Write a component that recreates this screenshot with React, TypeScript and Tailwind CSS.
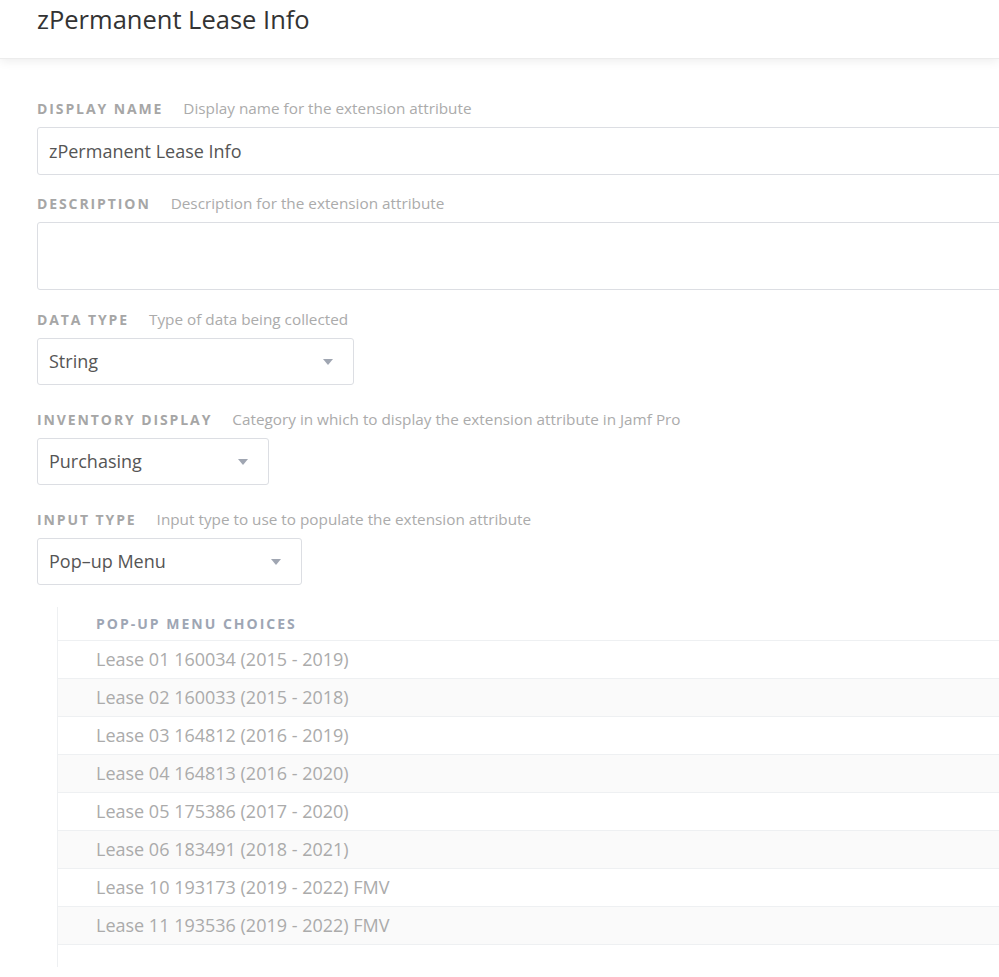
import React from 'react';

const CHOICES = [
  'Lease 01 160034 (2015 - 2019)',
  'Lease 02 160033 (2015 - 2018)',
  'Lease 03 164812 (2016 - 2019)',
  'Lease 04 164813 (2016 - 2020)',
  'Lease 05 175386 (2017 - 2020)',
  'Lease 06 183491 (2018 - 2021)',
  'Lease 10 193173 (2019 - 2022) FMV',
  'Lease 11 193536 (2019 - 2022) FMV',
];

function FieldLabel({ name, help }: { name: string; help: string }) {
  return (
    <div className="flex items-baseline gap-5 h-[18px] mb-[10px] leading-[18px]">
      <span className="text-[14px] font-bold tracking-[1.9px] text-[#a6a6a6] uppercase">{name}</span>
      <span className="text-[15.3px] text-[#ababab]">{help}</span>
    </div>
  );
}

function Caret() {
  return (
    <svg width="10" height="6" viewBox="0 0 10 6" className="shrink-0">
      <path d="M0 0h10L5 6z" fill="#a0a6b2" />
    </svg>
  );
}

function Select({ value, width }: { value: string; width: string }) {
  return (
    <div className={`${width} h-[47px] flex items-center justify-between pl-[11px] pr-[20px] border border-[#dcdee3] rounded-[3px] bg-white`}>
      <span className="text-[18px] text-[#555]">{value}</span>
      <Caret />
    </div>
  );
}

export default function App() {
  return (
    <div className="w-[999px] h-[977px] overflow-hidden bg-white font-['Open_Sans',sans-serif]">
      {/* Header */}
      <div className="h-[59px] pl-[37px] pt-[2px] bg-white shadow-[0_2px_10px_rgba(0,0,0,0.08)] border-b border-[#ececec] relative z-10">
        <h1 className="text-[25.5px] text-[#333] leading-[34px]">zPermanent Lease Info</h1>
      </div>

      <div className="pl-[37px] pt-[40px]">
        <FieldLabel name="Display Name" help="Display name for the extension attribute" />
        <div className="w-[1000px] h-[48px] flex items-center pl-[11px] border border-[#dcdee3] rounded-[3px]">
          <span className="text-[18px] text-[#555]">zPermanent Lease Info</span>
        </div>

        <div className="mt-[19px]">
          <FieldLabel name="Description" help="Description for the extension attribute" />
          <div className="w-[1000px] h-[68px] border border-[#dcdee3] rounded-[3px]" />
        </div>

        <div className="mt-[20px]">
          <FieldLabel name="Data Type" help="Type of data being collected" />
          <Select value="String" width="w-[317px]" />
        </div>

        <div className="mt-[25px]">
          <FieldLabel name="Inventory Display" help="Category in which to display the extension attribute in Jamf Pro" />
          <Select value="Purchasing" width="w-[232px]" />
        </div>

        <div className="mt-[25px]">
          <FieldLabel name="Input Type" help="Input type to use to populate the extension attribute" />
          <Select value="Pop–up Menu" width="w-[265px]" />
        </div>

        {/* Choices table */}
        <div className="mt-[22px] ml-[20px] border-l border-[#eef0f2] h-[360px]">
          <div className="h-[34px] flex items-center pl-[38px] border-b border-[#eef0f2]">
            <span className="text-[14px] font-bold tracking-[2px] text-[#9ea6b4] uppercase">Pop-up Menu Choices</span>
          </div>
          {CHOICES.map((c, i) => (
            <div
              key={c}
              className={`h-[38px] flex items-center pl-[38px] border-b border-[#eef0f2] ${i % 2 === 1 ? 'bg-[#fafafa]' : 'bg-white'}`}
            >
              <span className="text-[18px] text-[#ababab]">{c}</span>
            </div>
          ))}
        </div>
      </div>
    </div>
  );
}
